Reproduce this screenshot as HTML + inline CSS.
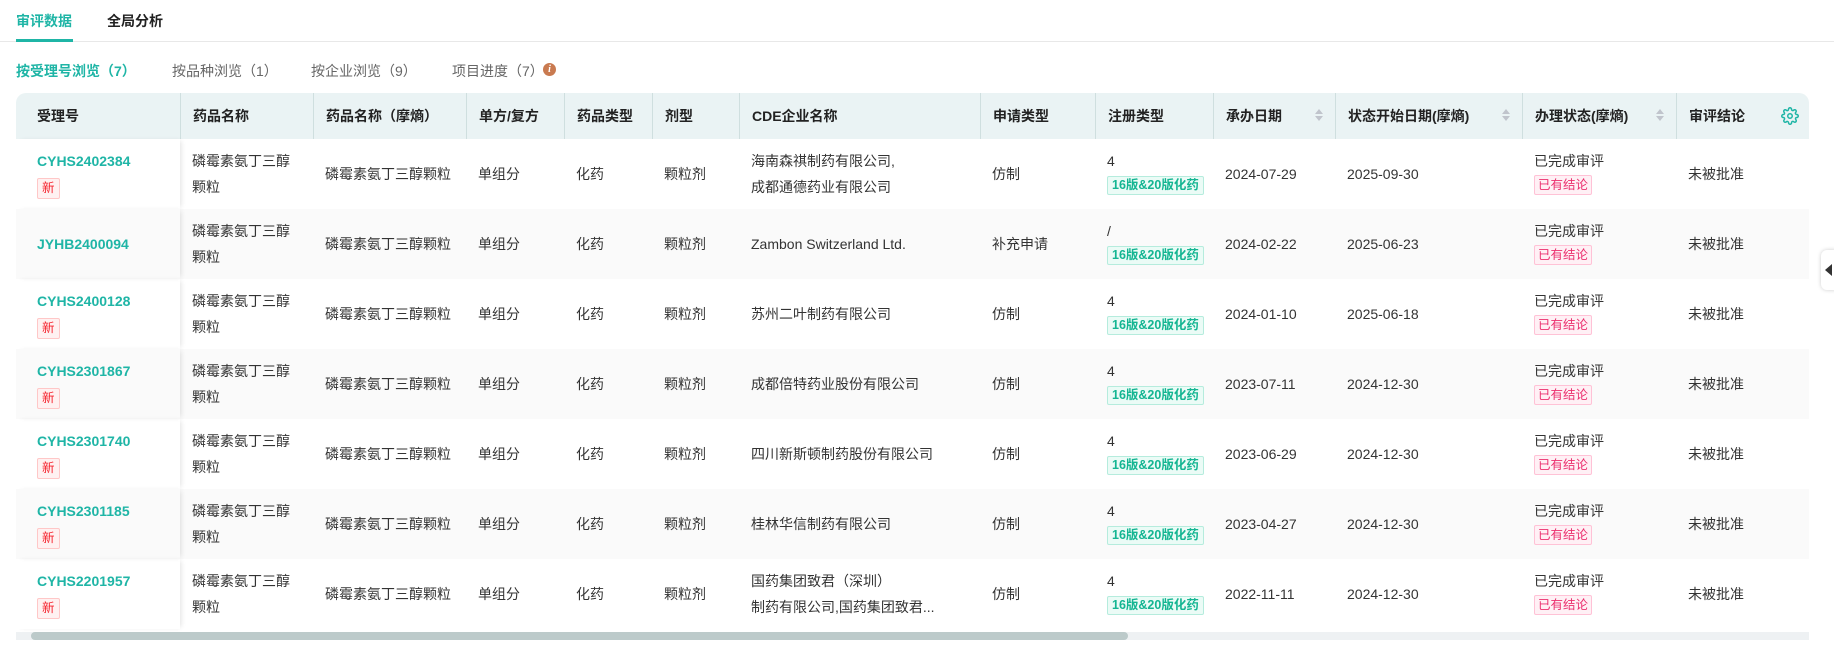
<!DOCTYPE html>
<html><head><meta charset="utf-8"><style>
*{box-sizing:border-box;margin:0;padding:0}
body{width:1834px;height:646px;overflow:hidden;background:#fff;font-family:"Liberation Sans","Noto Sans CJK SC",sans-serif;color:#333;position:relative}
.tabs{position:absolute;left:0;top:0;width:1834px;height:42px;border-bottom:1px solid #e8e8e8}
.tab{position:absolute;top:11px;font-size:14px;font-weight:bold;color:#222}
.tab.on{color:#1fb5a6}
.ul{position:absolute;left:16px;top:39px;width:57px;height:3px;background:#1fb5a6}
.sub{position:absolute;top:61px;font-size:14px;color:#666}
.sub.on{color:#1fb5a6;font-weight:bold}
.info{position:absolute;left:405px;top:63px;width:13px;height:13px;border-radius:50%;background:#c97a50;color:#fff;font-size:10px;font-style:italic;font-weight:bold;text-align:center;line-height:13px;font-family:"Liberation Serif",serif}
table{position:absolute;left:16px;top:93px;border-collapse:separate;border-spacing:0;table-layout:fixed;width:1793px}
th{height:46px;background:#eaf3f4;text-align:left;font-size:14px;font-weight:bold;color:#222;padding-left:12px;border-left:1px solid #cfdfdf;position:relative}
th:first-child{border-left:none;border-radius:10px 0 0 0;padding-left:21px}
th:last-child{border-radius:0 10px 0 0}
td{height:70px;font-size:14px;padding-left:12px;line-height:26px;vertical-align:middle;color:#333}
td:first-child{padding-left:21px;box-shadow:3px 0 5px -2px rgba(0,0,0,.12);position:relative}
tr.g td{background:#fafafa}
.code{color:#1fb5a6;font-weight:bold;font-size:14px}
.new{display:inline-block;border:1px solid #ffc7c7;background:#fff1f1;color:#f5222d;font-size:12.5px;line-height:19px;padding:0 4px;border-radius:2px;margin-top:4px}
.rt{display:inline-block;border:1px solid #b5ecdd;background:#ebfbf6;color:#14b592;font-size:12.5px;font-weight:bold;line-height:17px;padding:0 4px;border-radius:2px}
.st{display:inline-block;border:1px solid #ffc2d6;background:#fff0f5;color:#eb2f6e;font-size:12.5px;line-height:18px;padding:0 3px;border-radius:2px}
.l1{line-height:20px}
.sort{position:absolute;right:12px;top:16px;width:8px}
.sort i{display:block;width:0;height:0;border-left:4px solid transparent;border-right:4px solid transparent;margin-bottom:2px}
.sort i.u{border-bottom:5px solid #c0c4cc}.sort i.d{border-top:5px solid #c0c4cc}
.scroll{position:absolute;left:16px;top:632px;width:1793px;height:8px;background:#eef1f3}
.thumb{position:absolute;left:15px;top:0;width:1097px;height:8px;background:#bccaca;border-radius:4px}
.side{position:absolute;left:1821px;top:250px;width:16px;height:40px;background:#fff;border-radius:6px 0 0 6px;box-shadow:0 0 4px rgba(0,0,0,.2)}
.side:after{content:"";position:absolute;left:4px;top:14px;border-top:6px solid transparent;border-bottom:6px solid transparent;border-right:7px solid #333}
</style></head><body>
<div class="tabs"><span class="tab on" style="left:16px">审评数据</span><span class="tab" style="left:107px">全局分析</span><div class="ul"></div></div>
<span class="sub on" style="left:16px">按受理号浏览（7）</span>
<span class="sub" style="left:172px">按品种浏览（1）</span>
<span class="sub" style="left:311px">按企业浏览（9）</span>
<span class="sub" style="left:452px">项目进度（7）</span>
<div class="info" style="left:543px">i</div>
<table>
<colgroup><col style="width:164px"><col style="width:133px"><col style="width:153px"><col style="width:98px"><col style="width:88px"><col style="width:87px"><col style="width:241px"><col style="width:115px"><col style="width:118px"><col style="width:122px"><col style="width:187px"><col style="width:154px"><col style="width:133px"></colgroup>
<tr><th>受理号</th><th>药品名称</th><th>药品名称（摩熵）</th><th>单方/复方</th><th>药品类型</th><th>剂型</th><th>CDE企业名称</th><th>申请类型</th><th>注册类型</th><th>承办日期<span class="sort"><i class="u"></i><i class="d"></i></span></th><th>状态开始日期(摩熵)<span class="sort"><i class="u"></i><i class="d"></i></span></th><th>办理状态(摩熵)<span class="sort"><i class="u"></i><i class="d"></i></span></th><th>审评结论<svg style="position:absolute;right:10px;top:14px" width="18" height="18" viewBox="0 0 24 24" fill="none" stroke="#1fb5a6" stroke-width="2"><circle cx="12" cy="12" r="3"/><path d="M19.4 15a1.65 1.65 0 0 0 .33 1.820l.06.06a2 2 0 1 1-2.830 2.830l-.06-.06a1.65 1.65 0 0 0-1.820-.33 1.65 1.65 0 0 0-1 1.510V21a2 2 0 1 1-4 0v-.09A1.65 1.65 0 0 0 9 19.4a1.65 1.65 0 0 0-1.820.33l-.06.06a2 2 0 1 1-2.830-2.830l.06-.06a1.65 1.65 0 0 0 .33-1.820 1.65 1.65 0 0 0-1.510-1H3a2 2 0 1 1 0-4h.09A1.65 1.65 0 0 0 4.6 9a1.65 1.65 0 0 0-.33-1.820l-.06-.06a2 2 0 1 1 2.830-2.830l.06.06a1.65 1.65 0 0 0 1.820.33H9a1.65 1.65 0 0 0 1-1.510V3a2 2 0 1 1 4 0v.09a1.65 1.65 0 0 0 1 1.510 1.65 1.65 0 0 0 1.820-.33l.06-.06a2 2 0 1 1 2.830 2.830l-.06.06a1.65 1.65 0 0 0-.33 1.820V9a1.65 1.65 0 0 0 1.510 1H21a2 2 0 1 1 0 4h-.09a1.65 1.65 0 0 0-1.510 1z"/></svg></th></tr>
<tr><td><div class="code">CYHS2402384</div><span class="new">新</span></td><td>磷霉素氨丁三醇<br>颗粒</td><td>磷霉素氨丁三醇颗粒</td><td>单组分</td><td>化药</td><td>颗粒剂</td><td>海南森祺制药有限公司,<br>成都通德药业有限公司</td><td>仿制</td><td><div class="l1">4</div><span class="rt">16版&amp;20版化药</span></td><td>2024-07-29</td><td>2025-09-30</td><td><div class="l1">已完成审评</div><span class="st">已有结论</span></td><td>未被批准</td></tr>
<tr class="g"><td><div class="code">JYHB2400094</div></td><td>磷霉素氨丁三醇<br>颗粒</td><td>磷霉素氨丁三醇颗粒</td><td>单组分</td><td>化药</td><td>颗粒剂</td><td>Zambon Switzerland Ltd.</td><td>补充申请</td><td><div class="l1">/</div><span class="rt">16版&amp;20版化药</span></td><td>2024-02-22</td><td>2025-06-23</td><td><div class="l1">已完成审评</div><span class="st">已有结论</span></td><td>未被批准</td></tr>
<tr><td><div class="code">CYHS2400128</div><span class="new">新</span></td><td>磷霉素氨丁三醇<br>颗粒</td><td>磷霉素氨丁三醇颗粒</td><td>单组分</td><td>化药</td><td>颗粒剂</td><td>苏州二叶制药有限公司</td><td>仿制</td><td><div class="l1">4</div><span class="rt">16版&amp;20版化药</span></td><td>2024-01-10</td><td>2025-06-18</td><td><div class="l1">已完成审评</div><span class="st">已有结论</span></td><td>未被批准</td></tr>
<tr class="g"><td><div class="code">CYHS2301867</div><span class="new">新</span></td><td>磷霉素氨丁三醇<br>颗粒</td><td>磷霉素氨丁三醇颗粒</td><td>单组分</td><td>化药</td><td>颗粒剂</td><td>成都倍特药业股份有限公司</td><td>仿制</td><td><div class="l1">4</div><span class="rt">16版&amp;20版化药</span></td><td>2023-07-11</td><td>2024-12-30</td><td><div class="l1">已完成审评</div><span class="st">已有结论</span></td><td>未被批准</td></tr>
<tr><td><div class="code">CYHS2301740</div><span class="new">新</span></td><td>磷霉素氨丁三醇<br>颗粒</td><td>磷霉素氨丁三醇颗粒</td><td>单组分</td><td>化药</td><td>颗粒剂</td><td>四川新斯顿制药股份有限公司</td><td>仿制</td><td><div class="l1">4</div><span class="rt">16版&amp;20版化药</span></td><td>2023-06-29</td><td>2024-12-30</td><td><div class="l1">已完成审评</div><span class="st">已有结论</span></td><td>未被批准</td></tr>
<tr class="g"><td><div class="code">CYHS2301185</div><span class="new">新</span></td><td>磷霉素氨丁三醇<br>颗粒</td><td>磷霉素氨丁三醇颗粒</td><td>单组分</td><td>化药</td><td>颗粒剂</td><td>桂林华信制药有限公司</td><td>仿制</td><td><div class="l1">4</div><span class="rt">16版&amp;20版化药</span></td><td>2023-04-27</td><td>2024-12-30</td><td><div class="l1">已完成审评</div><span class="st">已有结论</span></td><td>未被批准</td></tr>
<tr><td><div class="code">CYHS2201957</div><span class="new">新</span></td><td>磷霉素氨丁三醇<br>颗粒</td><td>磷霉素氨丁三醇颗粒</td><td>单组分</td><td>化药</td><td>颗粒剂</td><td>国药集团致君（深圳）<br>制药有限公司,国药集团致君...</td><td>仿制</td><td><div class="l1">4</div><span class="rt">16版&amp;20版化药</span></td><td>2022-11-11</td><td>2024-12-30</td><td><div class="l1">已完成审评</div><span class="st">已有结论</span></td><td>未被批准</td></tr>
</table>
<div class="scroll"><div class="thumb"></div></div>
<div class="side"></div>
</body></html>
